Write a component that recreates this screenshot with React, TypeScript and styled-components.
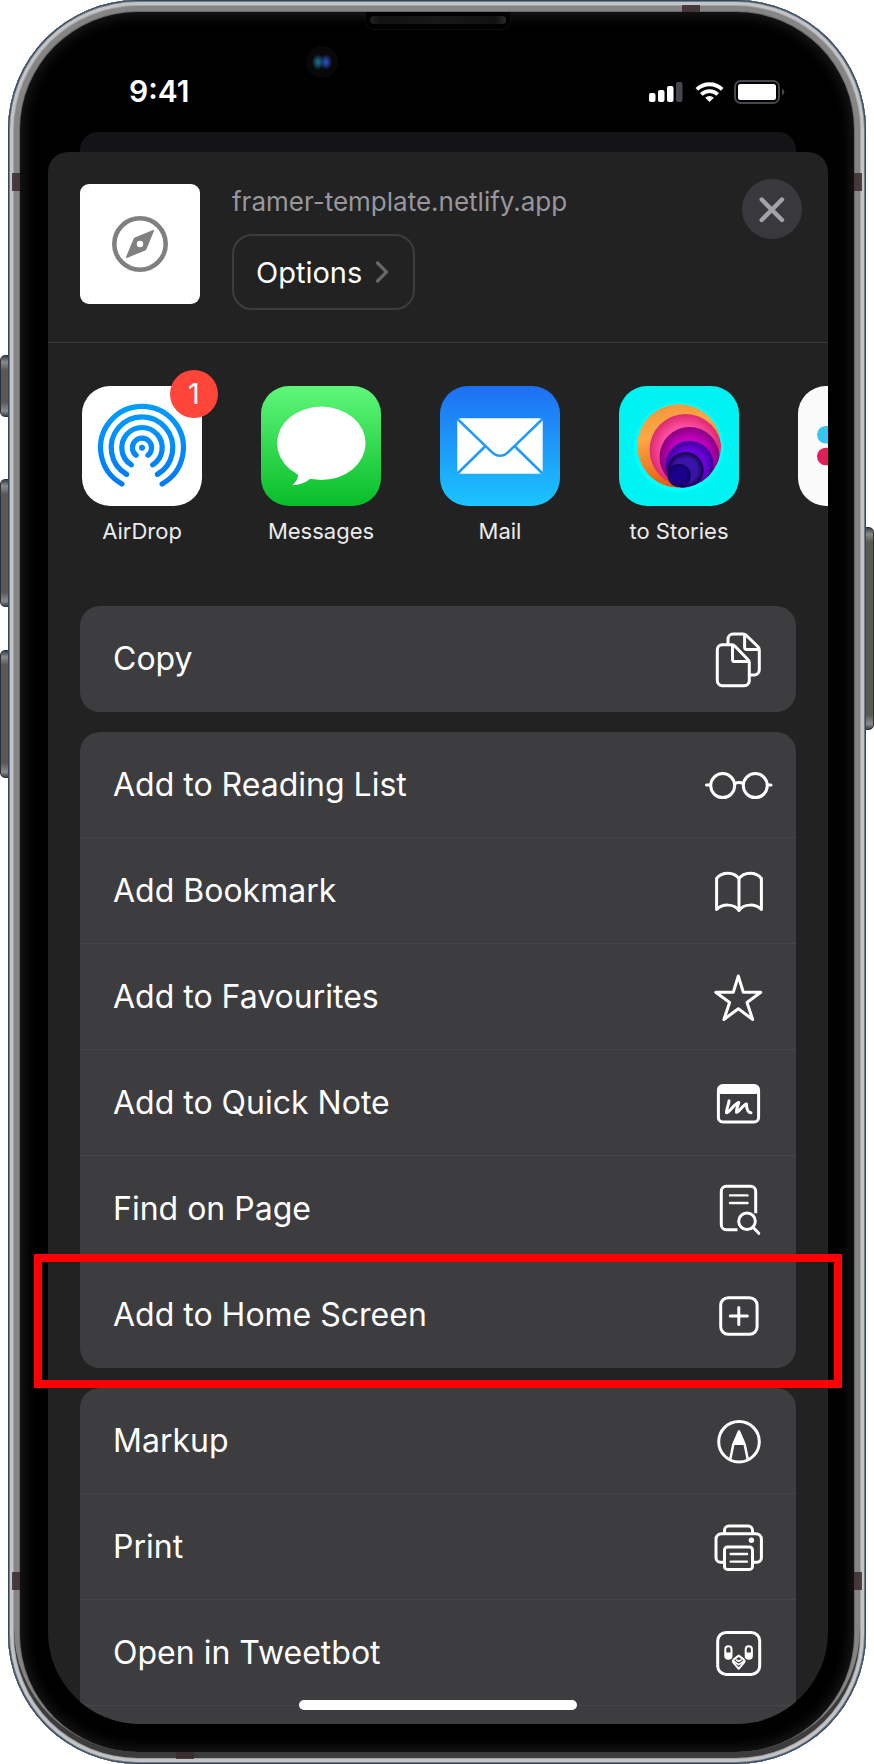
import React from 'react';
import styled, { createGlobalStyle } from 'styled-components';

const GlobalStyle = createGlobalStyle`
  * { box-sizing: border-box; }
  body { margin: 0; background: #fff; font-family: Inter, "Liberation Sans", sans-serif; color: #fff; }
  button { font: inherit; color: inherit; background: none; border: 0; padding: 0; cursor: pointer; }
  ul { list-style: none; margin: 0; padding: 0; }
  svg { display: block; }
`;

const Stage = styled.div`
  position: relative;
  padding: 0 8px;
`;

const SideButton = styled.span<{ $side: 'left' | 'right'; $top: number; $height: number }>`
  position: absolute;
  ${p => p.$side}: 0;
  top: ${p => p.$top}px;
  width: 16px;
  height: ${p => p.$height}px;
  border: 1px solid #2b333c;
  border-radius: 5px;
  background: linear-gradient(#3a4148, #8b8b89 6px, #5a5853 14px, #5a5853 calc(100% - 14px), #8b8b89 calc(100% - 5px), #3a4148);
`;

const Phone = styled.main`
  position: relative;
  padding: 0 38px 40px 40px;
  border-radius: 130px;
  background: #000;
  box-shadow:
    inset 0 0 0 1px #33475e,
    inset 0 0 0 2px #6f7c89,
    inset 0 0 0 5px #c4c4c6,
    inset 0 0 0 6px #a5a5a7,
    inset 0 -6px 0 6px #3c3c3c,
    inset 0 0 0 11px #858585,
    inset 0 0 0 12px #6a6a6a,
    inset 0 0 14px 15px #1c1c1c;
`;

const Antenna = styled.span<{ $vertical?: boolean; $x: string; $y: string }>`
  position: absolute;
  ${p => p.$x};
  ${p => p.$y};
  width: ${p => (p.$vertical ? 8 : 18)}px;
  height: ${p => (p.$vertical ? 18 : 7)}px;
  background: rgba(56, 44, 42, 0.85);
`;

const Speaker = styled.span`
  position: absolute;
  left: 50%;
  top: 12px;
  width: 146px;
  height: 18px;
  margin-left: -72px;
  padding: 4px;
  border: solid #0e0e0e;
  border-width: 0 1px 1px;
  border-radius: 0 0 9px 9px;
  background: #000;
  &::after {
    content: '';
    display: block;
    height: 8px;
    border-radius: 4px;
    background: linear-gradient(90deg, #222, #111 8%, #181818 50%, #111 92%, #2a2a2a);
  }
`;

const Camera = styled.span`
  position: absolute;
  left: 50%;
  top: 46px;
  width: 32px;
  height: 32px;
  margin-left: -131px;
  border-radius: 50%;
  background:
    radial-gradient(ellipse 6px 8px at 12px 16px, #1d6384 20%, transparent),
    radial-gradient(ellipse 6px 8px at 20px 16px, #2547b8 20%, transparent),
    #080808;
`;

const StatusBar = styled.header`
  display: flex;
  align-items: flex-start;
  justify-content: space-between;
  height: 132px;
  padding: 72px 42px 0 81px;
`;

const Clock = styled.time`
  font-size: 30px;
  line-height: 38px;
  font-weight: 600;
`;

const StatusIcons = styled.div`
  padding-top: 7px;
`;

const BackSheet = styled.div`
  height: 20px;
  margin: 0 32px;
  border-radius: 18px 18px 0 0;
  background: #141416;
`;

const Sheet = styled.section`
  position: relative;
  overflow: hidden;
  border-radius: 20px 20px 92px 92px;
  background: #222223;
`;

const SheetHeader = styled.div`
  display: flex;
  gap: 32px;
  height: 191px;
  padding: 32px 26px 0 32px;
  border-bottom: 1px solid #3a3a3c;
`;

const SiteIcon = styled.div`
  flex: none;
  width: 120px;
  height: 120px;
  border-radius: 9px;
  background: #fff;
`;

const SiteInfo = styled.div`
  flex: 1;
  min-width: 0;
`;

const SiteUrl = styled.div`
  font-size: 26px;
  line-height: 36px;
  margin-bottom: 14px;
  color: #98979e;
`;

const OptionsButton = styled.button`
  display: flex;
  align-items: center;
  gap: 13px;
  height: 76px;
  padding: 0 24px 0 22px;
  border: 2px solid #3d3d41;
  border-radius: 20px;
  font-size: 29px;
`;

const CloseButton = styled.button`
  flex: none;
  width: 60px;
  height: 60px;
  margin-top: -5px;
  border-radius: 50%;
  background: #39393d;
`;

const AppRow = styled.ul`
  display: flex;
  gap: 59px;
  overflow: hidden;
  padding: 43px 0 61px 34px;
`;

const AppItem = styled.li`
  flex: none;
  width: 120px;
`;

const AppButton = styled.button`
  position: relative;
  display: block;
  width: 120px;
`;

const AppTile = styled.span<{ $fill: string }>`
  display: block;
  height: 120px;
  border-radius: 28px;
  background: ${p => p.$fill};
  overflow: hidden;
`;

const AppLabel = styled.span`
  display: block;
  height: 28px;
  margin-top: 11px;
  font-size: 22px;
  line-height: 28px;
  text-align: center;
  white-space: nowrap;
  color: #ebebeb;
`;

const Badge = styled.span`
  position: absolute;
  top: -16px;
  right: -16px;
  width: 48px;
  height: 48px;
  border-radius: 50%;
  background: #ff453a;
  font-size: 29px;
  line-height: 48px;
  text-align: center;
`;

const Groups = styled.div`
  display: flex;
  flex-direction: column;
  gap: 20px;
  margin: 0 32px;
`;

const Group = styled.ul<{ $cut?: boolean }>`
  border-radius: ${p => (p.$cut ? '20px 20px 0 0' : '20px')};
  padding-bottom: ${p => (p.$cut ? 18 : 0)}px;
  background: #3d3d3f;
`;

const Action = styled.li<{ $line: boolean }>`
  height: 106px;
  border-bottom: 1px solid ${p => (p.$line ? '#464648' : 'transparent')};
`;

const ActionButton = styled.button`
  display: flex;
  align-items: center;
  justify-content: space-between;
  width: 100%;
  height: 100%;
  padding: 0 24px 0 33px;
  font-size: 32px;
  text-align: left;
`;

const HomeIndicator = styled.span`
  position: absolute;
  left: 50%;
  bottom: 14px;
  width: 278px;
  height: 10px;
  margin-left: -139px;
  border-radius: 5px;
  background: #fff;
`;

const Highlight = styled.span`
  position: absolute;
  left: 26px;
  right: 24px;
  top: 1254px;
  height: 134px;
  border: 8px solid #f00;
  pointer-events: none;
`;

function Glyph({ children }: { children: React.ReactNode }) {
  return (
    <svg width="68" height="64" viewBox="0 0 68 64" overflow="visible" fill="none" stroke="#fff"
      strokeWidth="3" strokeLinecap="round" strokeLinejoin="round" aria-hidden="true">
      {children}
    </svg>
  );
}

const icons: Record<string, React.ReactNode> = {
  copy: (
    <>
      <path d="M28 17.7H18.3a5 5 0 0 0-5 5V53.7a5 5 0 0 0 5 5H40.3a5 5 0 0 0 5-5V35.5a4 4 0 0 0-1.2-2.8L30.8 19a4 4 0 0 0-2.8-1.3z" />
      <path d="M28.5 18.5V32.2a2.4 2.4 0 0 0 2.4 2.4H44.6" />
      <path d="M24 17.3V12a5 5 0 0 1 5-5h10a4.500 4.500 0 0 1 3.200 1.300l11.800 11.500a4.500 4.500 0 0 1 1.300 3.200V43a5 5 0 0 1-5 5H45.500" />
      <path d="M40.600 8V20.200a2.200 2.200 0 0 0 2.200 2.200H54.600" />
    </>
  ),
  glasses: (
    <>
      <circle cx="18.7" cy="32.6" r="12" />
      <circle cx="51.300" cy="32.600" r="12" />
      <path d="M30.500 30.600Q35 28.300 39.500 30.600M2.500 32H6.500M63.500 32H67" />
    </>
  ),
  book: (
    <path d="M35 19.700C30 12.500 18 12.500 12.600 19.500V50.500C18.500 44.500 30 44.500 35 51.500C40 44.500 51.500 44.500 57.400 50.500V19.500C52 12.500 40 12.500 35 19.700ZM35 19.700V51.500" />
  ),
  star: (
    <path d="M34.300 11L39.300 27.300H56.800L43 37.500L48.700 54.500L34.300 43.700L19.900 54.500L25.600 37.500L11.800 27.300H29.300Z" />
  ),
  note: (
    <>
      <rect x="14.400" y="14.400" width="40.200" height="36.600" rx="4.500" />
      <rect x="15" y="14.500" width="39" height="8.500" rx="2" fill="#fff" stroke="none" />
      <path d="M25 29.800C25 34 22 38 22.500 41.800C25 42 30 33 34.800 31.500C34 35 32 38 32.500 41.200C35 41.500 38.500 34 42.500 33C42.500 37 43 41.500 47 41.800" />
    </>
  ),
  find: (
    <>
      <path d="M51.700 36.300V14.300a5 5 0 0 0-5-5H22.300a5 5 0 0 0-5 5V47.700a5 5 0 0 0 5 5H33.500" strokeLinecap="butt" />
      <path d="M26 18.400H43.500M26 26H43.500" strokeWidth="2.400" />
      <circle cx="43" cy="44.300" r="8.300" />
      <path d="M49.200 50.500L54.800 56.300" />
    </>
  ),
  add: (
    <>
      <rect x="16.700" y="14.700" width="36.400" height="36.600" rx="7.500" />
      <path d="M34.800 24.500V41.500M26.300 33H43.300" />
    </>
  ),
  markup: (
    <>
      <circle cx="35" cy="32.700" r="20.300" />
      <path d="M35 22.500L30 35H40Z" fill="#fff" strokeWidth="2" />
      <path d="M35 22.500L29.300 35.500L26.300 50M35 22.500L40.700 35.500L43.700 50" strokeWidth="2.500" />
    </>
  ),
  print: (
    <>
      <path d="M20.300 47.300H16.500a4.500 4.500 0 0 1-4.500-4.500V24.200a5.500 5.500 0 0 1 5.500-5.500H51.900a5.500 5.500 0 0 1 5.500 5.500V42.800a4.500 4.500 0 0 1-4.500 4.500H48.700" />
      <path d="M20.500 18.500V15.300a4.300 4.300 0 0 1 4.300-4.300H44.200a4.300 4.300 0 0 1 4.300 4.300V18.500" />
      <rect x="20.500" y="32" width="28" height="22.400" rx="3" />
      <path d="M26.700 39H43M26.700 46.600H43" strokeWidth="2.400" />
      <circle cx="47.400" cy="25.300" r="2.700" fill="#fff" stroke="none" />
    </>
  ),
  tweetbot: (
    <>
      <rect x="13.700" y="11.400" width="42" height="42" rx="8.500" />
      <rect x="21.300" y="25.200" width="6.200" height="12.600" rx="3.100" strokeWidth="2" />
      <rect x="41.700" y="25.200" width="6.200" height="12.600" rx="3.100" strokeWidth="2" />
      <path d="M21.300 31.500h6.200v3.200a3.100 3.100 0 0 1-6.200 0zM41.700 31.500h6.200v3.200a3.100 3.100 0 0 1-6.200 0z" fill="#fff" stroke="none" />
      <path d="M34.700 34.600L39.600 38.400Q41.300 40 39.900 41.700L34.700 47.800L29.500 41.700Q28.100 40 29.800 38.400Z" strokeWidth="2" />
      <path d="M30 40.500L34.700 43.600L39.400 40.500M32.300 39L34.700 40.300L37.100 39" strokeWidth="1.600" />
    </>
  ),
};

const arc = (r: number, degrees: number) => {
  const a = (degrees * Math.PI) / 180;
  const dx = r * Math.sin(a);
  const y = 61.7 + r * Math.cos(a);
  return `M${60 - dx} ${y}A${r} ${r} 0 1 1 ${60 + dx} ${y}`;
};

const AirDropArt = () => (
  <svg width="120" height="120" viewBox="0 0 120 120" fill="none" aria-hidden="true">
    <defs>
      <linearGradient id="airdrop" gradientUnits="userSpaceOnUse" x1="0" y1="18" x2="0" y2="102">
        <stop stopColor="#009dff" />
        <stop offset="1" stopColor="#007af6" />
      </linearGradient>
    </defs>
    <g stroke="url(#airdrop)" strokeWidth="5.200" strokeLinecap="round">
      <path d={arc(41.400, 29)} />
      <path d={arc(30.800, 30)} />
      <path d={arc(20.200, 32)} />
      <path d={arc(9.600, 38)} />
    </g>
    <circle cx="60" cy="61.700" r="3" fill="#0089fb" />
  </svg>
);

const MessagesArt = () => (
  <svg width="120" height="120" viewBox="0 0 120 120" fill="#fff" aria-hidden="true">
    <ellipse cx="60.300" cy="57.300" rx="44.300" ry="36.700" />
    <path d="M36 87C38.500 90 36 95 31.300 99.300C38 99 44 97 49 93L56 86Z" />
  </svg>
);

const MailArt = () => (
  <svg width="120" height="120" viewBox="0 0 120 120" aria-hidden="true">
    <rect x="17.300" y="32.300" width="85.400" height="55.400" rx="3.500" fill="#fff" />
    <g fill="none" stroke="#219cfc" strokeWidth="2.600">
      <path d="M18 33.500L50.500 64.800Q60 74.600 69.500 64.800L102 33.500" />
      <path d="M45.500 60L18 87M74.500 60L102 87" />
    </g>
  </svg>
);

const rings = [
  { id: 'r1', cx: 60, cy: 60, r: 42, inner: '#ffab48', outer: '#e5681c' },
  { id: 'r2', cx: 66.5, cy: 64, r: 36, inner: '#ff4fa3', outer: '#dc2b6c' },
  { id: 'r3', cx: 70.5, cy: 71, r: 30, inner: '#c100bd', outer: '#85007e' },
  { id: 'r4', cx: 70.6, cy: 79, r: 24, inner: '#6d00dc', outer: '#3c0099' },
  { id: 'r5', cx: 66.6, cy: 84, r: 18, inner: '#3a14a8', outer: '#130049' },
  { id: 'r6', cx: 60.2, cy: 89.5, r: 11.6, inner: '#1b008a', outer: '#12005a' },
];

const StoriesArt = () => (
  <svg width="120" height="120" viewBox="0 0 120 120" aria-hidden="true">
    <defs>
      {rings.slice(1).map(c => (
        <radialGradient id={c.id} key={c.id}>
          <stop offset=".65" stopColor={c.inner} />
          <stop offset="1" stopColor={c.outer} />
        </radialGradient>
      ))}
      <linearGradient id="r1" x1="0" y1="0" x2="0.300" y2="1">
        <stop stopColor="#f0913a" />
        <stop offset=".4" stopColor="#fca944" />
        <stop offset="1" stopColor="#e55a10" />
      </linearGradient>
      <clipPath id="ringClip"><circle cx="60" cy="60" r="42" /></clipPath>
    </defs>
    <circle cx="60" cy="61" r="45" fill="#00fffb" />
    <g clipPath="url(#ringClip)">
      {rings.map(c => (
        <circle key={c.id} cx={c.cx} cy={c.cy} r={c.r} fill={`url(#${c.id})`} />
      ))}
    </g>
  </svg>
);

const SlackArt = () => (
  <svg width="120" height="120" viewBox="0 0 120 120" aria-hidden="true">
    <rect x="19" y="40" width="44" height="17.500" rx="8.750" fill="#36c5f0" />
    <rect x="19" y="61.700" width="44" height="17.500" rx="8.750" fill="#e01e5a" />
  </svg>
);

const apps = [
  { name: 'AirDrop', fill: '#fff', art: <AirDropArt />, badge: '1' },
  { name: 'Messages', fill: 'linear-gradient(#5ff77a, #08bd28)', art: <MessagesArt /> },
  { name: 'Mail', fill: 'linear-gradient(#1e6ff2, #1bc5fe)', art: <MailArt /> },
  { name: 'to Stories', fill: '#00f3f3', art: <StoriesArt /> },
  { name: '', fill: '#fafafa', art: <SlackArt /> },
];

const groups = [
  [{ label: 'Copy', icon: 'copy' }],
  [
    { label: 'Add to Reading List', icon: 'glasses' },
    { label: 'Add Bookmark', icon: 'book' },
    { label: 'Add to Favourites', icon: 'star' },
    { label: 'Add to Quick Note', icon: 'note' },
    { label: 'Find on Page', icon: 'find' },
    { label: 'Add to Home Screen', icon: 'add' },
  ],
  [
    { label: 'Markup', icon: 'markup' },
    { label: 'Print', icon: 'print' },
    { label: 'Open in Tweetbot', icon: 'tweetbot' },
  ],
];

export default function App() {
  return (
    <>
      <GlobalStyle />
      <Stage>
        <SideButton $side="left" $top={355} $height={62} />
        <SideButton $side="left" $top={479} $height={128} />
        <SideButton $side="left" $top={650} $height={128} />
        <SideButton $side="right" $top={527} $height={203} />
        <Phone>
          <Antenna $vertical $x="left: 4px" $y="top: 173px" />
          <Antenna $vertical $x="right: 4px" $y="top: 173px" />
          <Antenna $vertical $x="left: 4px" $y="bottom: 174px" />
          <Antenna $vertical $x="right: 4px" $y="bottom: 174px" />
          <Antenna $x="right: 166px" $y="top: 5px" />
          <Antenna $x="left: 168px" $y="bottom: 5px" />
          <Speaker />
          <Camera />
          <StatusBar>
            <Clock>9:41</Clock>
            <StatusIcons>
              <svg width="138" height="26" viewBox="0 0 138 26" aria-hidden="true">
                <g fill="#fff">
                  <rect x="1" y="14" width="6.500" height="9" rx="2" />
                  <rect x="10" y="11" width="6.500" height="12" rx="2" />
                  <rect x="19" y="7" width="6.500" height="16" rx="2" />
                  <rect x="28" y="3" width="6.500" height="20" rx="2" fill="#47464c" />
                  <path d="M61.500 23L57.200 18.700a6.200 6.200 0 0 1 8.600 0z" />
                </g>
                <g fill="none" stroke="#fff" strokeWidth="3.800">
                  <path d="M53.300 15.400a11.800 11.800 0 0 1 16.400 0" />
                  <path d="M48.800 10.300a18.500 18.500 0 0 1 25.400 0" />
                </g>
                <rect x="87" y="2" width="44" height="22" rx="5.500" fill="none" stroke="#47464c" strokeWidth="2" />
                <rect x="90" y="5" width="38" height="16" rx="2.500" fill="#fff" />
                <path d="M134 9.500q2.400 1 2.400 3.500t-2.400 3.500z" fill="#47464c" />
              </svg>
            </StatusIcons>
          </StatusBar>
          <BackSheet />
          <Sheet>
            <SheetHeader>
              <SiteIcon>
                <svg width="120" height="120" viewBox="0 0 120 120" aria-hidden="true">
                  <circle cx="60" cy="60" r="25.700" fill="none" stroke="#808080" strokeWidth="4.600" />
                  <path d="M73.300 46.700L65.500 65.500L46.700 73.300L54.500 54.500Z" fill="#808080" stroke="#808080" strokeWidth="1.500" strokeLinejoin="round" />
                  <circle cx="60" cy="60" r="3.200" fill="#fff" />
                </svg>
              </SiteIcon>
              <SiteInfo>
                <SiteUrl>framer-template.netlify.app</SiteUrl>
                <OptionsButton type="button">
                  Options
                  <svg width="14" height="22" viewBox="0 0 14 22" fill="none" stroke="#68676d" strokeWidth="3.200" strokeLinecap="round" strokeLinejoin="round" aria-hidden="true">
                    <path d="M2.500 2L11.500 11L2.500 20" />
                  </svg>
                </OptionsButton>
              </SiteInfo>
              <CloseButton type="button" aria-label="Close">
                <svg width="60" height="60" viewBox="0 0 60 60" stroke="#a3a2aa" strokeWidth="4.400" strokeLinecap="round" aria-hidden="true">
                  <path d="M19.700 20.500L40 41M40 20.500L19.700 41" />
                </svg>
              </CloseButton>
            </SheetHeader>
            <AppRow>
              {apps.map((app, i) => (
                <AppItem key={i}>
                  <AppButton type="button">
                    <AppTile $fill={app.fill}>{app.art}</AppTile>
                    {app.badge && <Badge>{app.badge}</Badge>}
                    <AppLabel>{app.name}</AppLabel>
                  </AppButton>
                </AppItem>
              ))}
            </AppRow>
            <Groups>
              {groups.map((items, g) => {
                const cut = g === groups.length - 1;
                return (
                  <Group key={g} $cut={cut}>
                    {items.map((item, i) => (
                      <Action key={item.label} $line={cut || i < items.length - 1}>
                        <ActionButton type="button">
                          {item.label}
                          <Glyph>{icons[item.icon]}</Glyph>
                        </ActionButton>
                      </Action>
                    ))}
                  </Group>
                );
              })}
            </Groups>
            <HomeIndicator />
          </Sheet>
          <Highlight />
        </Phone>
      </Stage>
    </>
  );
}
